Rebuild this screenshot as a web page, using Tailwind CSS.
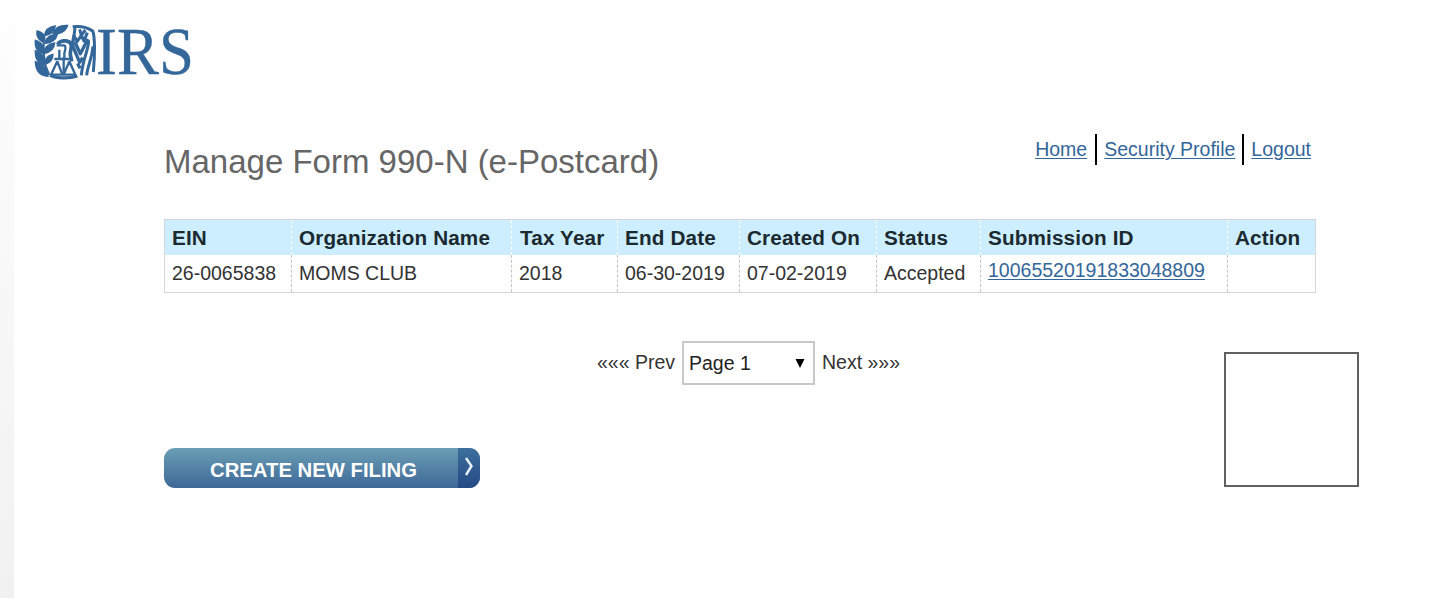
<!DOCTYPE html>
<html lang="en">
<head>
<meta charset="utf-8">
<title>Manage Form 990-N (e-Postcard)</title>
<script src="https://cdn.jsdelivr.net/npm/@tailwindcss/browser@4"></script>
</head>
<body class="bg-[#fefefe] font-['Liberation_Sans',Arial,sans-serif] text-[19.5px] leading-[24px] text-[#333333]">
<div class="flex h-[598px] w-[1454px] overflow-hidden">
  <div class="w-[14px] shrink-0 bg-linear-to-b from-[#fefefe] to-[#f1f1f1]"></div>
  <div class="flex-1">
    <header class="pl-[11px] pt-[10px]">
      <svg class="block h-[80px] w-[180px]" viewBox="0 -15 540 240" role="img" aria-label="IRS">
        <g fill="#336699" stroke="#336699" stroke-width="4">
          <path d="M128 31C106 30 90 38 84 55C105 59 122 50 128 31Z"/>
          <path d="M91 33C71 36 60 45 59 62C77 60 88 50 91 33Z"/>
          <path d="M36 48C33 64 42 77 56 82C65 66 56 52 36 48Z"/>
          <path d="M97 59C77 57 63 67 60 85C80 84 93 74 97 59Z"/>
          <path d="M31 76C29 99 37 112 56 116C59 94 49 81 31 76Z"/>
          <path d="M89 84C69 87 58 97 56 116C76 112 88 101 89 84Z"/>
          <path d="M31 107C30 132 42 146 61 149C61 126 50 113 31 107Z"/>
          <path d="M84 118C68 121 59 131 60 149C77 143 84 133 84 118Z"/>
          <path d="M31 140C32 166 44 182 69 184C69 161 53 146 31 140Z"/>
        </g>
        <g fill="none" stroke="#336699" stroke-width="7" stroke-linejoin="round">
          <path d="M56 80L56 114L61 150L73 180" stroke-width="6"/>
          <path d="M143 35C165 33 188 37 203 48C210 63 210 121 205 171" stroke-width="9"/>
          <path d="M98 88C104 77 127 73 136 84C145 96 134 105 136 119L140 139" stroke-width="11"/>
          <path d="M95 91H117C126 94 120 104 118 115V132M88 132H144M103 104V131M116 127V178"/>
          <path d="M97 139L78 179H112L97 139M133 139L116 179H151L133 139" stroke-width="7"/>
          <path d="M75 181C94 190 131 192 157 183" stroke-width="10"/>
          <path d="M150 39L147 61L156 80L169 61L177 78L187 53M164 43L169 61L181 45" stroke-width="9"/>
          <path d="M147 61L142 90L164 142L173 128M150 82L166 116L189 72M158 145L165 160" stroke-width="10"/>
          <path d="M191 76C191 107 174 127 169 181M204 94C201 133 188 150 185 181" stroke-width="9"/>
        </g>
        <text x="213" y="176" textLength="294" lengthAdjust="spacingAndGlyphs" fill="#336699" stroke="#336699" stroke-width="1" font-family="Liberation Serif, serif" font-size="201">IRS</text>
      </svg>
    </header>
    <main class="ml-[150px] w-[1195px]">
      <div class="flex h-[129px] w-[1152px] justify-between">
        <h1 class="pt-[52px] text-[33px] leading-[40px] text-[#666666]">Manage Form 990-N (e-Postcard)</h1>
        <nav class="mt-[44px] mr-[5px] flex h-[31px] text-[#336699] leading-[30px]">
          <a class="underline underline-offset-2" href="#">Home</a>
          <a class="ml-[8px] border-l-2 border-black pl-[7px] underline underline-offset-2" href="#">Security Profile</a>
          <a class="ml-[7px] border-l-2 border-black pl-[7px] underline underline-offset-2" href="#">Logout</a>
        </nav>
      </div>
      <table class="h-[74px] w-[1152px] table-fixed border-separate border-spacing-0 border border-[#d3d7da] text-left">
        <colgroup><col class="w-[127px]"><col class="w-[220px]"><col class="w-[106px]"><col class="w-[122px]"><col class="w-[137px]"><col class="w-[104px]"><col class="w-[247px]"><col></colgroup>
        <thead class="bg-[#cceeff] text-[20.7px] tracking-[0.15px] text-[#1b2a31]">
          <tr class="h-[35px]">
            <th class="border-r border-dashed border-white p-0 pl-[7px]">EIN</th>
            <th class="border-r border-dashed border-white p-0 pl-[7px]">Organization Name</th>
            <th class="border-r border-dashed border-white p-0 pl-[8px]">Tax Year</th>
            <th class="border-r border-dashed border-white p-0 pl-[7px]">End Date</th>
            <th class="border-r border-dashed border-white p-0 pl-[7px]">Created On</th>
            <th class="border-r border-dashed border-white p-0 pl-[7px]">Status</th>
            <th class="border-r border-dashed border-white p-0 pl-[7px]">Submission ID</th>
            <th class="p-0 pl-[7px]">Action</th>
          </tr>
        </thead>
        <tbody>
          <tr class="h-[37px]">
            <td class="border-r border-dashed border-[#c4c4c4] p-0 pb-[2px] pl-[7px]">26-0065838</td>
            <td class="border-r border-dashed border-[#c4c4c4] p-0 pb-[2px] pl-[7px]">MOMS CLUB</td>
            <td class="border-r border-dashed border-[#c4c4c4] p-0 pb-[2px] pl-[7px]">2018</td>
            <td class="border-r border-dashed border-[#c4c4c4] p-0 pb-[2px] pl-[7px]">06-30-2019</td>
            <td class="border-r border-dashed border-[#c4c4c4] p-0 pb-[2px] pl-[7px]">07-02-2019</td>
            <td class="border-r border-dashed border-[#c4c4c4] p-0 pb-[2px] pl-[7px]">Accepted</td>
            <td class="border-r border-dashed border-[#c4c4c4] p-0 pb-[8px] pl-[7px]"><a class="text-[#336699] underline underline-offset-2" href="#">10065520191833048809</a></td>
            <td class="p-0"></td>
          </tr>
        </tbody>
      </table>
      <div class="flex justify-between">
        <div>
          <div class="ml-[433px] mt-[48px] flex h-[44px] items-center">
            <span class="w-[85px] whitespace-nowrap pb-[2px]">««« Prev</span>
            <div class="flex h-[44px] w-[133px] items-center justify-between border-2 border-[#c8c8c8] pl-[5px] pr-[8px] text-[#222222]">
              <span>Page 1</span>
              <svg class="h-[9px] w-[10px]" viewBox="0 0 10 9"><path d="M0.5 0H9.5L5 9Z" fill="#000"/></svg>
            </div>
            <span class="ml-[7px] whitespace-nowrap pb-[2px]">Next »»»</span>
          </div>
          <button class="mt-[63px] flex h-[40px] w-[316px] overflow-hidden rounded-[11px] bg-linear-to-b from-[#6b9eb3] to-[#3e6898] text-[20.3px] font-bold leading-[44px] text-white">
            <span class="w-[294px] pl-[5px] text-center">CREATE NEW FILING</span>
            <span class="h-[40px] w-[22px] bg-linear-to-b from-[#3d6f9c] to-[#264a85]">
              <svg class="h-[40px] w-[22px]" viewBox="0 0 22 40"><path d="M8 10L13.5 18L8 27" fill="none" stroke="#e8f2fa" stroke-width="2.4"/></svg>
            </span>
          </button>
        </div>
        <div class="mt-[59px] h-[135px] w-[135px] border-2 border-[#606060]"></div>
      </div>
    </main>
  </div>
</div>
</body>
</html>
